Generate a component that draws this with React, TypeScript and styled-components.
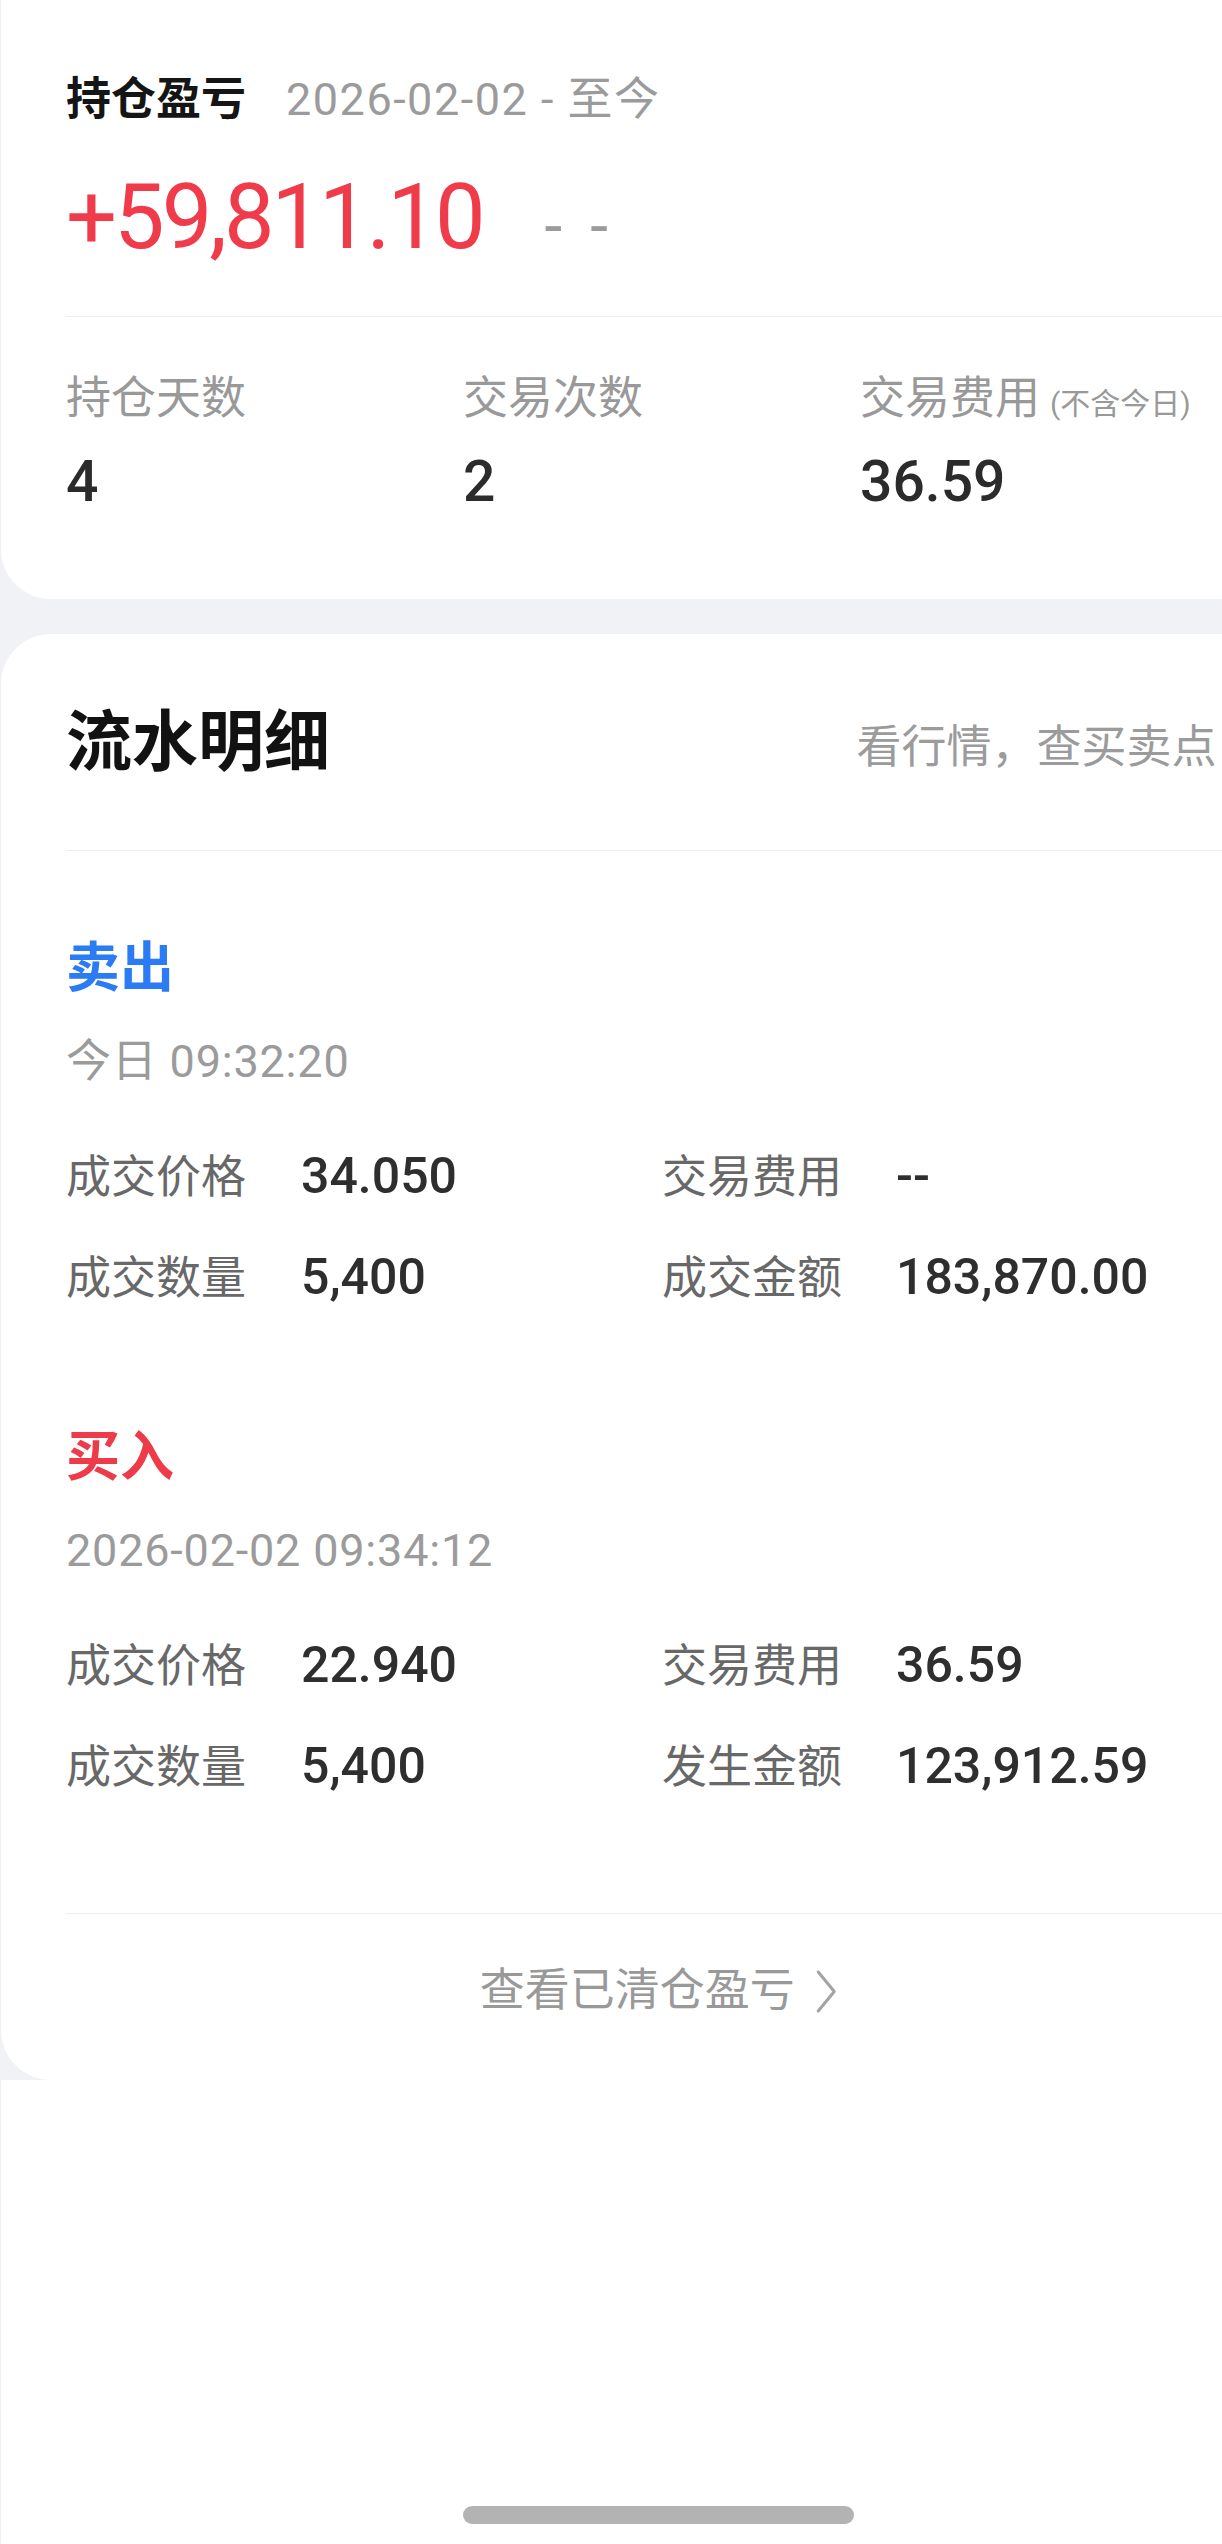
import styled, { createGlobalStyle } from "styled-components";

const GlobalStyle = createGlobalStyle`
  html, body {
    margin: 0;
    padding: 0;
    background: #ffffff;
  }
  body {
    font-family: "Roboto", "Noto Sans CJK SC", "Noto Sans", sans-serif;
    -webkit-font-smoothing: antialiased;
  }
`;

interface Trade {
  side: string;
  color: string;
  time: string;
  price: string;
  fee: string;
  qty: string;
  amountLabel: string;
  amount: string;
}

const trades: Trade[] = [
  {
    side: "卖出",
    color: "#2a7bf4",
    time: "今日 09:32:20",
    price: "34.050",
    fee: "--",
    qty: "5,400",
    amountLabel: "成交金额",
    amount: "183,870.00",
  },
  {
    side: "买入",
    color: "#ee3b49",
    time: "2026-02-02 09:34:12",
    price: "22.940",
    fee: "36.59",
    qty: "5,400",
    amountLabel: "发生金额",
    amount: "123,912.59",
  },
];

function Chevron({ size = 45 }: { size?: number }) {
  return (
    <svg width={size * 0.5} height={size} viewBox="0 0 22 45" fill="none">
      <polyline
        points="3,3 19,22.5 3,42"
        stroke="#a3a3a3"
        strokeWidth="3"
        strokeLinecap="round"
        strokeLinejoin="round"
      />
    </svg>
  );
}

export default function App() {
  return (
    <Frame>
      <GlobalStyle />
      <Page>
        <Stack>
          <SummaryCard>
            <TitleRow>
              <Title>持仓盈亏</Title>
              <Period>2026-02-02 - 至今</Period>
            </TitleRow>
            <ProfitRow>
              <Profit>+59,811.10</Profit>
              <Ratio>- -</Ratio>
            </ProfitRow>
            <Divider $top={34} />
            <StatsGrid>
              <Stat>
                <StatLabel>持仓天数</StatLabel>
                <StatValue>4</StatValue>
              </Stat>
              <Stat>
                <StatLabel>交易次数</StatLabel>
                <StatValue>2</StatValue>
              </Stat>
              <Stat>
                <StatLabel>
                  交易费用<Note>(不含今日)</Note>
                </StatLabel>
                <StatValue>36.59</StatValue>
              </Stat>
            </StatsGrid>
          </SummaryCard>

          <DetailCard>
            <CardHeader>
              <SectionTitle>流水明细</SectionTitle>
              <HeaderLink>
                看行情，查买卖点
                <Chevron />
              </HeaderLink>
            </CardHeader>
            <Divider $top={62} />
            <TradeList>
              {trades.map((t) => (
                <TradeBlock key={t.time}>
                  <Side $color={t.color}>{t.side}</Side>
                  <Time>{t.time}</Time>
                  <DetailGrid>
                    <FieldLabel>成交价格</FieldLabel>
                    <FieldValue>{t.price}</FieldValue>
                    <FieldLabel>交易费用</FieldLabel>
                    <FieldValue>{t.fee}</FieldValue>
                    <FieldLabel>成交数量</FieldLabel>
                    <FieldValue>{t.qty}</FieldValue>
                    <FieldLabel>{t.amountLabel}</FieldLabel>
                    <FieldValue>{t.amount}</FieldValue>
                  </DetailGrid>
                </TradeBlock>
              ))}
            </TradeList>
            <Divider />
            <Footer>
              查看已清仓盈亏
              <Chevron />
            </Footer>
          </DetailCard>
        </Stack>
        <NavArea>
          <HomeBar />
        </NavArea>
      </Page>
    </Frame>
  );
}

const Frame = styled.div`
  width: 100%;
  overflow: hidden;
`;

const Page = styled.div`
  width: 1316px;
  min-height: 2544px;
  display: flex;
  flex-direction: column;
  background: #ffffff;
  border-left: 1px solid #f1f1f3;
  box-sizing: border-box;
`;

const Stack = styled.div`
  display: flex;
  flex-direction: column;
  gap: 35px;
  background: #f1f2f6;
`;

const SummaryCard = styled.section`
  background: #ffffff;
  border-radius: 0 0 50px 50px;
  padding: 70px 65px 82px;
`;

const TitleRow = styled.div`
  display: flex;
  align-items: baseline;
  gap: 40px;
  line-height: 60px;
`;

const Title = styled.span`
  font-size: 45px;
  font-weight: 700;
  color: #151515;
`;

const Period = styled.span`
  font-size: 45px;
  letter-spacing: 1.5px;
  color: #9b9b9b;
`;

const ProfitRow = styled.div`
  display: flex;
  align-items: baseline;
  gap: 62px;
  margin-top: 33px;
  line-height: 110px;
`;

const Profit = styled.span`
  font-size: 90px;
  letter-spacing: -3px;
  color: #ef3b4a;
`;

const Ratio = styled.span`
  font-size: 64px;
  letter-spacing: 6px;
  color: #9b9b9b;
`;

const Divider = styled.div<{ $top?: number }>`
  height: 1px;
  background: #eeeeee;
  margin-top: ${(p) => p.$top ?? 0}px;
`;

const StatsGrid = styled.div`
  display: grid;
  grid-template-columns: repeat(3, 397px);
  margin-top: 52px;
`;

const Stat = styled.div`
  display: flex;
  flex-direction: column;
  gap: 18px;
`;

const StatLabel = styled.div`
  font-size: 45px;
  line-height: 60px;
  color: #999999;
  white-space: nowrap;
`;

const Note = styled.span`
  font-size: 30px;
  line-height: 1;
  color: #999999;
  margin-left: 10px;
`;

const StatValue = styled.div`
  font-size: 57px;
  line-height: 70px;
  font-weight: 500;
  color: #2b2b2b;
`;

const DetailCard = styled.section`
  background: #ffffff;
  border-radius: 50px;
  padding: 64px 65px 0;
`;

const CardHeader = styled.div`
  display: flex;
  justify-content: space-between;
  align-items: center;
  height: 90px;
`;

const SectionTitle = styled.h2`
  margin: 0;
  font-size: 66px;
  line-height: 90px;
  font-weight: 700;
  color: #121212;
`;

const HeaderLink = styled.div`
  display: flex;
  align-items: center;
  gap: 12px;
  font-size: 45px;
  color: #9b9b9b;
`;

const TradeList = styled.div`
  display: flex;
  flex-direction: column;
  gap: 114px;
  padding: 83px 0 115px;
`;

const TradeBlock = styled.div`
  display: flex;
  flex-direction: column;
`;

const Side = styled.div<{ $color: string }>`
  font-size: 54px;
  line-height: 70px;
  font-weight: 700;
  color: ${(p) => p.$color};
`;

const Time = styled.div`
  margin-top: 28px;
  font-size: 45px;
  line-height: 60px;
  letter-spacing: 0.8px;
  color: #9b9b9b;
`;

const DetailGrid = styled.div`
  display: grid;
  grid-template-columns: 235px 361px 234px 1fr;
  row-gap: 39px;
  margin-top: 54px;
  line-height: 60px;
  align-items: baseline;
`;

const FieldLabel = styled.span`
  font-size: 45px;
  color: #686868;
`;

const FieldValue = styled.span`
  font-size: 50px;
  font-weight: 500;
  color: #2e2e2e;
`;

const Footer = styled.div`
  display: flex;
  justify-content: center;
  align-items: center;
  gap: 20px;
  padding: 47px 0 59px;
  font-size: 45px;
  line-height: 60px;
  color: #999999;
`;

const NavArea = styled.div`
  flex: 1;
  display: flex;
  align-items: flex-end;
  justify-content: center;
  padding-bottom: 20px;
`;

const HomeBar = styled.div`
  width: 391px;
  height: 18px;
  border-radius: 9px;
  background: #b3b3b3;
`;
